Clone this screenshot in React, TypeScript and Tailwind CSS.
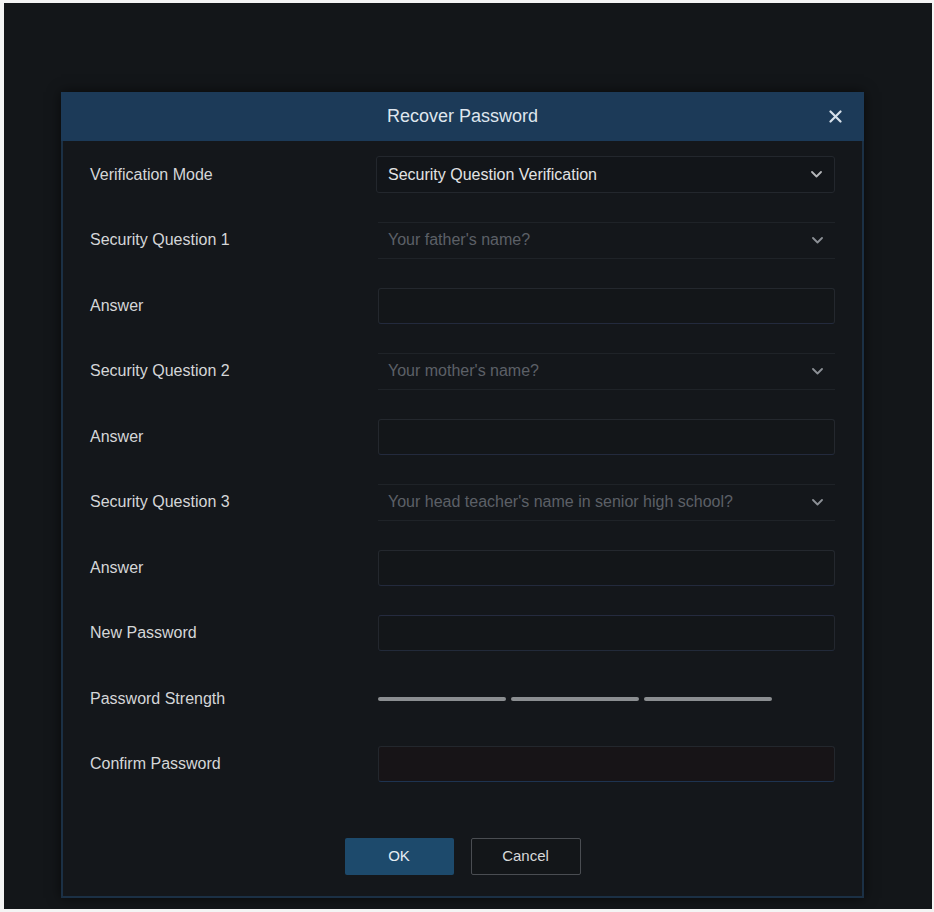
import React from "react";

type Row =
  | { label: string; kind: "mode"; value: string }
  | { label: string; kind: "question"; value: string }
  | { label: string; kind: "input"; tone?: "blue" | "confirm" }
  | { label: string; kind: "strength" };

const rows: Row[] = [
  { label: "Verification Mode", kind: "mode", value: "Security Question Verification" },
  { label: "Security Question 1", kind: "question", value: "Your father's name?" },
  { label: "Answer", kind: "input" },
  { label: "Security Question 2", kind: "question", value: "Your mother's name?" },
  { label: "Answer", kind: "input" },
  { label: "Security Question 3", kind: "question", value: "Your head teacher's name in senior high school?" },
  { label: "Answer", kind: "input" },
  { label: "New Password", kind: "input", tone: "blue" },
  { label: "Password Strength", kind: "strength" },
  { label: "Confirm Password", kind: "input", tone: "confirm" },
];

const Chevron = ({ dim }: { dim?: boolean }) => (
  <svg width="11" height="7" viewBox="0 0 11 7" fill="none" className="shrink-0">
    <path
      d="M1 1l4.5 4.5L10 1"
      stroke={dim ? "#8c9096" : "#b4b6b9"}
      strokeWidth="1.8"
      strokeLinecap="round"
      strokeLinejoin="round"
    />
  </svg>
);

const Field = ({ row }: { row: Row }) => {
  if (row.kind === "mode") {
    return (
      <div className="flex h-[37px] w-[459px] -ml-[2px] items-center justify-between rounded-[3px] border border-[#23272d] bg-[#121519] pl-[11px] pr-[12px]">
        <span className="text-[#e2e3e4]">{row.value}</span>
        <Chevron />
      </div>
    );
  }
  if (row.kind === "question") {
    return (
      <div className="flex h-[37px] w-[457px] items-center justify-between border-y border-[#1f2328] pl-[10px] pr-[12px]">
        <span className="text-[#5c6067]">{row.value}</span>
        <Chevron dim />
      </div>
    );
  }
  if (row.kind === "strength") {
    return (
      <div className="flex w-[457px] gap-[5px]">
        <div className="h-[4px] w-[128px] rounded-full bg-[#8b8e91]" />
        <div className="h-[4px] w-[128px] rounded-full bg-[#8b8e91]" />
        <div className="h-[4px] w-[128px] rounded-full bg-[#8b8e91]" />
      </div>
    );
  }
  const cls =
    row.tone === "blue"
      ? "border-[#23272e] border-t-[#252b3f] border-b-[#222a3a] bg-[#131619]"
      : row.tone === "confirm"
      ? "border-[#23272d] border-b-[#1e3350] bg-[#171417]"
      : "border-[#24282e] border-b-[#232a3d] bg-[#131619]";
  return <div className={`h-[36px] w-[457px] rounded-[3px] border ${cls}`} />;
};

export default function App() {
  return (
    <div
      className="h-[912px] w-[934px] bg-[#f4f4f4] pt-[3px] pl-[4px] pr-[2px] pb-[3px]"
      style={{ fontFamily: '"Liberation Sans", Arial, sans-serif' }}
    >
      <div className="h-full w-full overflow-hidden bg-[#131619] pl-[57px] pt-[89px]">
        <div className="flex w-[803px] flex-col shadow-[0_0_12px_rgba(0,0,0,0.6)]">
          {/* Header */}
          <div className="relative flex h-[49px] items-center justify-center bg-[#1c3a58]">
            <span className="text-[18px] text-[#dfe6ee]">Recover Password</span>
            <svg
              width="13"
              height="13"
              viewBox="0 0 13 13"
              className="absolute right-[22px] top-[18px]"
            >
              <path d="M1.5 1.5l10 10M11.5 1.5l-10 10" stroke="#d6e0ea" strokeWidth="2.2" strokeLinecap="round" />
            </svg>
          </div>

          {/* Body */}
          <div className="flex flex-col border-x-2 border-b-2 border-[#1b3045] bg-[#14171b] pl-[27px] pr-[27px] pt-px pb-[21px]">
            {rows.map((row, i) => (
              <div key={i} className="flex h-[65.5px] items-center">
                <div className="w-[288px] text-[16px] text-[#d4d6d8]">{row.label}</div>
                <Field row={row} />
              </div>
            ))}

            <div className="mt-[41px] flex justify-center gap-[17px] text-[15px]">
              <button className="h-[37px] w-[109px] rounded-[2px] bg-[#1d4a6c] text-[#e6edf3]">OK</button>
              <button className="h-[37px] w-[110px] rounded-[2px] border border-[#4a4d52] bg-[#131619] text-[#d8d9da]">
                Cancel
              </button>
            </div>
          </div>
        </div>
      </div>
    </div>
  );
}
